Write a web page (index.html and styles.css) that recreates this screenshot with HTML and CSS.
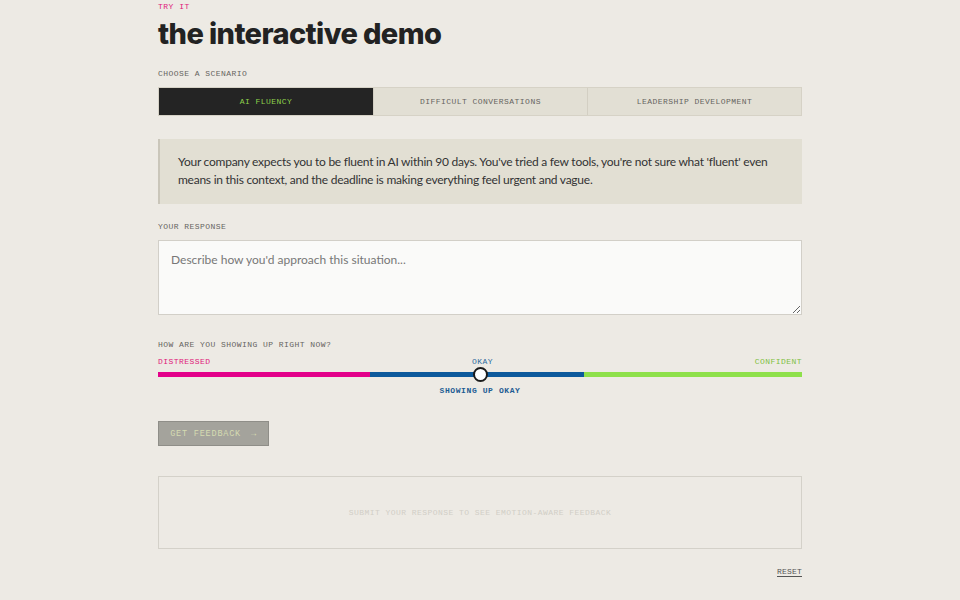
FILE: index.html
```
<!DOCTYPE html>
<html lang="en">
<head>
<meta charset="utf-8">
<title>Interactive demo</title>
<link rel="stylesheet" href="styles.css">
</head>
<body>
<main class="demo">
  <p class="eyebrow">TRY IT</p>
  <h1 class="title">the interactive demo</h1>

  <p class="label label-scenario">CHOOSE A SCENARIO</p>
  <div class="tabs">
    <button class="tab tab-active">AI FLUENCY</button>
    <button class="tab">DIFFICULT CONVERSATIONS</button>
    <button class="tab">LEADERSHIP DEVELOPMENT</button>
  </div>

  <div class="scenario">
    <p>Your company expects you to be fluent in AI within 90 days. You've tried a few tools, you're not sure what 'fluent' even means in this context, and the deadline is making everything feel urgent and vague.</p>
  </div>

  <p class="label label-response">YOUR RESPONSE</p>
  <textarea class="response" placeholder="Describe how you'd approach this situation..."></textarea>

  <p class="label label-mood">HOW ARE YOU SHOWING UP RIGHT NOW?</p>
  <div class="scale-labels">
    <span class="s-distressed">DISTRESSED</span>
    <span class="s-okay">OKAY</span>
    <span class="s-confident">CONFIDENT</span>
  </div>
  <div class="track">
    <span class="seg seg-pink"></span>
    <span class="seg seg-blue"></span>
    <span class="seg seg-green"></span>
    <span class="thumb"></span>
  </div>
  <p class="state">SHOWING UP OKAY</p>

  <button class="submit">GET FEEDBACK <span class="arrow">→</span></button>

  <div class="feedback">
    <p>SUBMIT YOUR RESPONSE TO SEE EMOTION-AWARE FEEDBACK</p>
  </div>

  <div class="reset-row"><a class="reset" href="#">RESET</a></div>
</main>
</body>
</html>
```
FILE: styles.css
```
* { box-sizing: border-box; }
html, body { margin: 0; padding: 0; }
body {
  background: #edeae4;
  font-family: "Lato", "DejaVu Sans", sans-serif;
  color: #2a2a2a;
}
p { margin: 0; }
.demo {
  width: 644px;
  margin: 0 auto;
  padding-top: 3px;
  display: flex;
  flex-direction: column;
}
.eyebrow {
  font-family: "Liberation Mono", monospace;
  font-size: 8px;
  letter-spacing: 0.5px;
  color: #e0197a;
  line-height: 8px;
}
.title {
  margin: 6px 0 0;
  font-family: "Inter", sans-serif;
  font-weight: 800;
  font-size: 29px;
  letter-spacing: -0.6px;
  line-height: 34px;
  color: #222;
}
.label {
  font-family: "Liberation Mono", monospace;
  font-size: 8px;
  letter-spacing: 0.45px;
  color: #66645f;
  line-height: 8px;
}
.label-scenario { margin-top: 19px; }
.tabs {
  margin-top: 9px;
  display: grid;
  grid-template-columns: 1fr 1fr 1fr;
  border: 1px solid #d6d2c6;
  height: 29px;
}
.tab {
  font-family: "Liberation Mono", monospace;
  font-size: 8px;
  letter-spacing: 0.45px;
  color: #66645f;
  background: #e2dfd4;
  border: 0;
  border-left: 1px solid #d3cfc3;
  padding: 0;
}
.tab:first-child { border-left: 0; }
.tab-active { background: #242424; color: #8ed14c; }
.scenario {
  margin-top: 23px;
  background: #e2dfd3;
  border-left: 2px solid #cac6ba;
  padding: 14px 14px 15px 18px;
  font-size: 12px;
  letter-spacing: -0.25px;
  line-height: 18px;
  color: #333;
}
.label-response { margin-top: 19px; }
.response {
  margin-top: 9px;
  height: 75px;
  width: 100%;
  background: #fafaf9;
  border: 1px solid #d2cfc8;
  border-radius: 0;
  padding: 11px 12px;
  font-family: "Lato", sans-serif;
  font-size: 12px;
  color: #333;
  resize: vertical;
}
.response::placeholder { color: #777; }
.label-mood { margin-top: 26px; }
.scale-labels {
  margin-top: 9px;
  display: flex;
  justify-content: space-between;
  font-family: "Liberation Mono", monospace;
  font-size: 8px;
  letter-spacing: 0.45px;
  line-height: 8px;
}
.s-distressed { color: #e0197a; }
.s-okay { color: #2d6a9c; }
.s-confident { color: #7fbf3f; }
.track {
  position: relative;
  margin-top: 6px;
  height: 5px;
  display: flex;
}
.seg { height: 5px; }
.seg-pink { width: 212px; background: #e3008a; }
.seg-blue { width: 214px; background: #0d5a9c; }
.seg-green { flex: 1; background: #8ee04a; }
.thumb {
  position: absolute;
  left: 50%;
  top: 50%;
  width: 15px;
  height: 15px;
  margin: -7.5px 0 0 -7.5px;
  border-radius: 50%;
  background: #fff;
  border: 2px solid #1c1c1c;
}
.state {
  margin-top: 10px;
  text-align: center;
  font-family: "Liberation Mono", monospace;
  font-weight: bold;
  font-size: 8px;
  letter-spacing: 0.6px;
  color: #1d5c93;
  line-height: 8px;
}
.submit {
  align-self: flex-start;
  margin-top: 26px;
  width: 111px;
  height: 25px;
  background: #a4a39c;
  border: 1px solid #8f8e88;
  color: #d5dbb1;
  font-family: "Liberation Mono", monospace;
  font-size: 8.5px;
  letter-spacing: 0.8px;
  padding: 0;
}
.arrow { margin-left: 4px; }
.feedback {
  margin-top: 30px;
  height: 73px;
  border: 1px solid #d4d1c9;
  display: flex;
  align-items: center;
  justify-content: center;
}
.feedback p {
  font-family: "Liberation Mono", monospace;
  font-size: 8px;
  letter-spacing: 0.45px;
  color: #d1cec6;
}
.reset-row {
  margin-top: 18px;
  display: flex;
  justify-content: flex-end;
}
.reset {
  font-family: "Liberation Mono", monospace;
  font-size: 8px;
  letter-spacing: 0.2px;
  color: #555;
  text-decoration: none;
  border-bottom: 1px solid #555;
  line-height: 9px;
}
```
